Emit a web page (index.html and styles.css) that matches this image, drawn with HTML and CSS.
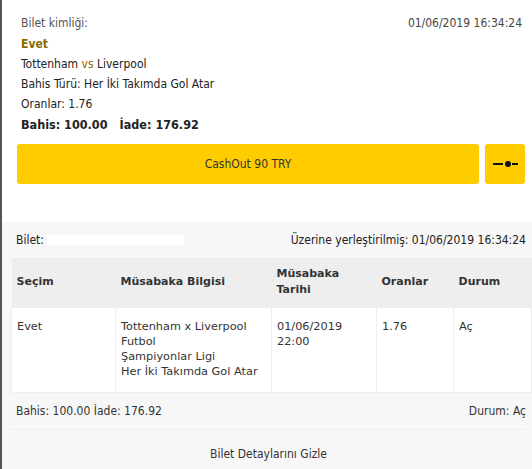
FILE: index.html
```html
<!DOCTYPE html>
<html>
<head>
<meta charset="utf-8">
<link rel="stylesheet" href="styles.css">
</head>
<body>
<div class="page">
  <section class="summary">
    <div class="row-top">
      <span class="label">Bilet kimliği:</span>
      <span class="date">01/06/2019 16:34:24</span>
    </div>
    <div class="choice">Evet</div>
    <div class="line">Tottenham <span class="vs">vs</span> Liverpool</div>
    <div class="line">Bahis Türü: Her İki Takımda Gol Atar</div>
    <div class="line">Oranlar: 1.76</div>
    <div class="line stake"><span>Bahis: 100.00</span><span>İade: 176.92</span></div>
    <div class="actions">
      <button class="cashout">CashOut 90 TRY</button>
      <button class="slider" aria-label="slider">
        <svg width="25" height="8" viewBox="0 0 25 8"><rect x="0" y="3" width="10" height="2" fill="#111"/><circle cx="15" cy="4" r="3" fill="#111"/><rect x="19" y="3" width="6" height="2" fill="#111"/></svg>
      </button>
    </div>
  </section>
  <section class="details">
    <div class="ticket-row">
      <span class="ticket">Bilet: <span class="redact"></span></span>
      <span>Üzerine yerleştirilmiş: 01/06/2019 16:34:24</span>
    </div>
    <table class="grid">
      <thead>
        <tr>
          <th class="c1">Seçim</th>
          <th class="c2">Müsabaka Bilgisi</th>
          <th class="c3">Müsabaka<br>Tarihi</th>
          <th class="c4">Oranlar</th>
          <th class="c5">Durum</th>
        </tr>
      </thead>
      <tbody>
        <tr>
          <td>Evet</td>
          <td>Tottenham x Liverpool<br>Futbol<br>Şampiyonlar Ligi<br>Her İki Takımda Gol Atar</td>
          <td>01/06/2019<br>22:00</td>
          <td>1.76</td>
          <td>Aç</td>
        </tr>
      </tbody>
    </table>
    <div class="totals">
      <span>Bahis: 100.00 İade: 176.92</span>
      <span>Durum: Aç</span>
    </div>
    <div class="hide">Bilet Detaylarını Gizle</div>
  </section>
</div>
</body>
</html>
```
FILE: styles.css
```css
html, body {
  margin: 0;
  padding: 0;
  background: #fff;
}
.page {
  width: 532px;
  height: 469px;
  border-left: 2px solid #555;
  box-sizing: border-box;
  font-family: "DejaVu Sans Condensed", "DejaVu Sans", sans-serif;
  font-size: 12px;
  color: #222;
  overflow: hidden;
}
.summary {
  padding: 13px 10px 0 19px;
  height: 222px;
  box-sizing: border-box;
  background: #fff;
}
.row-top {
  display: flex;
  justify-content: space-between;
  line-height: 20px;
  color: #444;
}
.label { color: #555; }
.date { color: #444; }
.choice {
  color: #8a6a00;
  font-weight: bold;
  line-height: 20px;
  padding-top: 1px;
}
.line {
  line-height: 20px;
}
.vs { color: #8a6a00; }
.stake {
  font-weight: bold;
  font-size: 12.5px;
  display: flex;
  gap: 12px;
  line-height: 21px;
}
.actions {
  display: flex;
  gap: 6px;
  margin-top: 9px;
  margin-left: -4px;
  margin-right: -3px;
}
.cashout, .slider {
  border: none;
  background: #ffcc00;
  border-radius: 3px;
  height: 40px;
  font-family: inherit;
  font-size: 12px;
  color: #333;
  padding: 0;
}
.cashout { flex: 1; }
.slider {
  width: 40px;
  display: flex;
  align-items: center;
  justify-content: center;
}
.details {
  background: #f7f7f7;
  height: 247px;
  padding: 0 6px 0 9px;
}
.ticket-row {
  display: flex;
  justify-content: space-between;
  line-height: 20px;
  padding: 8px 0 8px 5px;
  color: #222;
}
.redact {
  display: inline-block;
  width: 137px;
  height: 10px;
  background: #fff;
  vertical-align: -1px;
}
.grid {
  width: calc(100% + 6px);
  border-collapse: collapse;
  font-family: "DejaVu Sans", sans-serif;
  font-size: 11.3px;
  color: #333;
}
.grid th {
  background: #eee;
  text-align: left;
  font-weight: bold;
  font-size: 11px;
  height: 49px;
  padding: 0 5px;
  line-height: 16px;
  box-sizing: border-box;
}
.grid td {
  background: #fff;
  vertical-align: top;
  padding: 11px 5px 0;
  height: 85px;
  box-sizing: border-box;
  line-height: 15.3px;
  border: 1px solid #eee;
}
.c1 { width: 104px; }
.c2 { width: 156px; }
.c3 { width: 105px; }
.c4 { width: 77px; }
.totals {
  display: flex;
  justify-content: space-between;
  padding: 0 0 0 5px;
  line-height: 36px;
  border-bottom: 1px dotted #e6e6e6;
  color: #333;
}
.hide {
  text-align: center;
  line-height: 48px;
  color: #333;
}
```
